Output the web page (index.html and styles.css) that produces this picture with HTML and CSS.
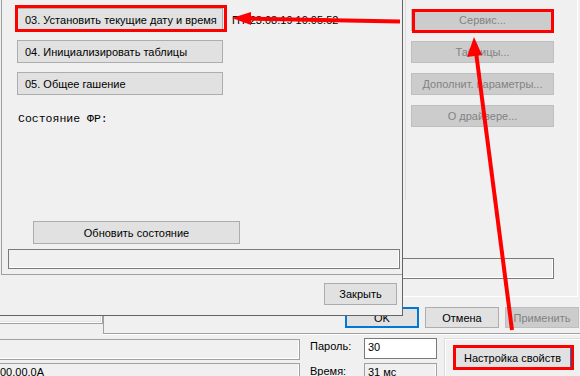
FILE: index.html
```html
<!DOCTYPE html>
<html lang="ru">
<head>
    <meta charset="UTF-8">
    <title>Тест драйвера ФР</title>
    <link rel="stylesheet" href="styles.css">
</head>
<body>

    <!-- окно свойств (на заднем плане) -->
    <div class="main">
        <div class="tabpage">
            <div class="side">
                <button class="btn off">Сервис...</button>
                <button class="btn off">Таблицы...</button>
                <button class="btn off">Дополнит. параметры...</button>
                <button class="btn off">О драйвере...</button>
                <div class="field wide"></div>
            </div>
        </div>

        <div class="actions">
            <div class="field ghost"></div>
            <button class="btn act default">OK</button>
            <button class="btn act">Отмена</button>
            <button class="btn act off">Применить</button>
        </div>

        <div class="sep"></div>

        <div class="bottom">
            <div class="leftfields">
                <div class="field grey"></div>
                <div class="field grey">00.00.0A</div>
            </div>
            <div class="params">
                <span class="label">Пароль:</span>
                <div class="field edit">30</div>
                <span class="label">Время:</span>
                <div class="field grey">31 мс</div>
            </div>
            <div class="group">
                <button class="btn setup">Настройка свойств</button>
            </div>
        </div>
    </div>

    <!-- диалог сервиса (на переднем плане) -->
    <div class="dialog">
        <div class="panel">
            <div class="cmds">
                <div class="row">
                    <button class="btn cmd">03. Установить текущие дату и время</button>
                    <span class="date">ПТ 23.08.19 10:05:52</span>
                </div>
                <button class="btn cmd">04. Инициализировать таблицы</button>
                <button class="btn cmd">05. Общее гашение</button>
            </div>
            <div class="state">Состояние ФР:</div>
            <button class="btn refresh">Обновить состояние</button>
            <div class="field status"></div>
        </div>
        <div class="foot">
            <button class="btn close">Закрыть</button>
        </div>
    </div>

    <!-- пометки красным -->
    <svg class="marks" width="580" height="376" viewBox="0 0 580 376">
        <g fill="none" stroke="#ff0000" stroke-width="3">
            <rect x="16.5" y="6.5" width="209" height="24"/>
            <rect x="413.5" y="10.5" width="139" height="21"/>
            <rect x="454.5" y="346.5" width="118" height="22"/>
        </g>
        <g stroke="#ff0000" stroke-width="4">
            <line x1="247" y1="18.5" x2="400" y2="21.5"/>
            <line x1="476" y1="52" x2="512" y2="330"/>
        </g>
        <g fill="#ff0000">
            <polygon points="232,18 251,12 251,25"/>
            <polygon points="474,37 467,57 482,55"/>
        </g>
    </svg>

</body>
</html>
```

FILE: styles.css
```css
* {
    box-sizing: border-box;
}

body {
    margin: 0;
    width: 580px;
    height: 376px;
    overflow: hidden;
    position: relative;
    background-color: #f0f0f0;
    font-family: "Liberation Sans", Arial, sans-serif;
    font-size: 11px;
    color: #000;
}

.btn {
    display: flex;
    align-items: center;
    justify-content: center;
    height: 23px;
    padding: 0;
    background-color: #e1e1e1;
    border: 1px solid #adadad;
    font: inherit;
    color: #000;
    white-space: nowrap;
}

.btn.off {
    background-color: #cccccc;
    border-color: #bfbfbf;
    color: #838383;
}

.field {
    height: 21px;
    border: 1px solid #7a7a7a;
    background-color: #f0f0f0;
    box-shadow: inset -1px -1px 0 #fff;
    padding: 2px 3px;
    white-space: nowrap;
    overflow: hidden;
}

/* ---------- окно свойств ---------- */

.main {
    position: absolute;
    left: 0;
    top: 0;
    width: 580px;
    height: 376px;
    display: flex;
    flex-direction: column;
}

.tabpage {
    width: 578px;
    height: 297px;
    flex-shrink: 0;
    border-right: 1px solid #fff;
    border-bottom: 1px solid #fff;
    display: flex;
    justify-content: flex-end;
    padding-right: 23px;
}

.side {
    width: 143px;
    display: flex;
    flex-direction: column;
    gap: 10px;
    padding: 9px 0 17px 0;
    position: relative;
}

.side::before {
    content: "";
    position: absolute;
    left: -6px;
    top: 0;
    height: 200px;
    border-left: 1px solid #dcdcdc;
}

.side .btn {
    height: 22px;
}

.field.wide {
    margin-top: auto;
    margin-left: -30px;
    width: 173px;
}

.actions {
    display: flex;
    justify-content: flex-end;
    gap: 6px;
    padding: 10px 1px 0 0;
}

.field.ghost {
    width: 105px;
    margin: -4px auto 0 -2px;
    border-color: #a0a0a0;
    box-shadow: inset -1px -1px 0 #fff, inset -2px -2px 0 #e3e3e3;
}

.btn.act {
    width: 74px;
    height: 21px;
}

.btn.default {
    border: 2px solid #0078d7;
}

.sep {
    position: relative;
    height: 2px;
    margin: 5px 0 0 103px;
    border-top: 1px solid #a0a0a0;
    border-bottom: 1px solid #fff;
}

.sep::before {
    content: "";
    position: absolute;
    left: 0;
    top: -20px;
    height: 20px;
    border-left: 1px solid #a0a0a0;
}

.bottom {
    display: flex;
    align-items: flex-start;
    padding-top: 3px;
}

.leftfields {
    margin-left: -2px;
    width: 302px;
    display: flex;
    flex-direction: column;
    gap: 3px;
    padding-top: 1px;
}

.field.grey {
    border-color: #a0a0a0;
}

.leftfields .field {
    padding-left: 1px;
}

.params {
    display: grid;
    grid-template-columns: 54px 73px;
    row-gap: 4px;
    margin-left: 10px;
}

.label {
    display: flex;
    align-items: center;
    height: 21px;
    padding-bottom: 5px;
}

.field.edit {
    background-color: #fff;
    box-shadow: none;
}

.group {
    flex: 1;
    height: 50px;
    margin-left: 7px;
    border-top: 1px solid #dcdcdc;
    border-left: 1px solid #dcdcdc;
    box-shadow: inset 1px 1px 0 #fff;
    padding: 7px 0 0 9px;
}

.btn.setup {
    width: 117px;
    border-color: #0078d7;
}

/* ---------- диалог ---------- */

.dialog {
    position: absolute;
    left: 0;
    top: 0;
    width: 403px;
    height: 316px;
    background-color: #f0f0f0;
    border-right: 1px solid #646464;
    border-bottom: 1px solid #646464;
    display: flex;
    flex-direction: column;
}

.panel {
    height: 275px;
    flex-shrink: 0;
    margin-left: 1px;
    border-left: 1px solid #a0a0a0;
    border-bottom: 1px solid #a0a0a0;
    display: flex;
    flex-direction: column;
}

.cmds {
    display: flex;
    flex-direction: column;
    gap: 9px;
    padding: 8px 0 0 15px;
}

.row {
    display: flex;
    align-items: center;
    gap: 9px;
}

.btn.cmd {
    width: 206px;
    justify-content: flex-start;
    padding-left: 7px;
}

.state {
    margin: 17px 0 0 16px;
    font-family: "Liberation Mono", "Courier New", monospace;
    font-size: 11.5px;
    line-height: 13px;
}

.btn.refresh {
    width: 207px;
    margin: auto 0 0 31px;
}

.field.status {
    width: 392px;
    height: 20px;
    margin: 5px 0 5px 6px;
}

.foot {
    flex: 1;
    display: flex;
    justify-content: flex-end;
    align-items: flex-start;
    padding: 8px 5px 0 0;
}

.btn.close {
    width: 73px;
    height: 22px;
}

/* ---------- пометки ---------- */

.marks {
    position: absolute;
    left: 0;
    top: 0;
    pointer-events: none;
}
```
